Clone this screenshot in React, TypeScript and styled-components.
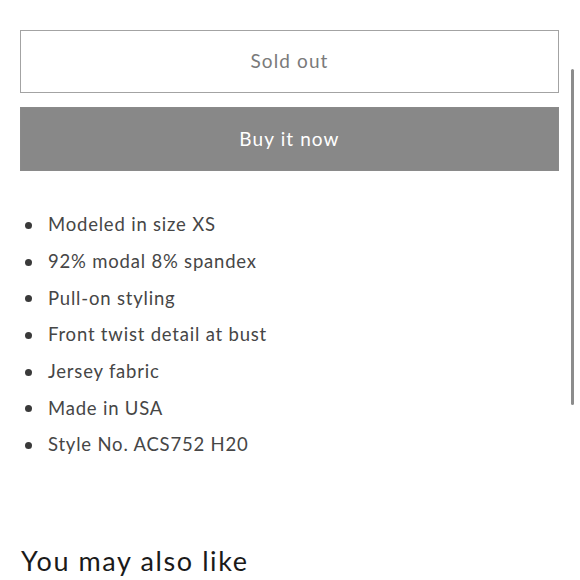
import React from 'react';
import styled, { createGlobalStyle } from 'styled-components';

const GlobalStyle = createGlobalStyle`
   html, body {
      margin: 0;
      padding: 0;
      background: #ffffff;
   }
   body {
      font-family: Lato, 'Open Sans', sans-serif;
      overflow: hidden;
   }
`;

const features = [
   'Modeled in size XS',
   '92% modal 8% spandex',
   'Pull-on styling',
   'Front twist detail at bust',
   'Jersey fabric',
   'Made in USA',
   'Style No. ACS752 H20',
];

const Page = styled.main`
   position: relative;
   width: 580px;
   height: 580px;
   padding: 30px 21px 0 20px;
   box-sizing: border-box;
`;

const Buttons = styled.div`
   display: flex;
   flex-direction: column;
   gap: 14px;
`;

const Button = styled.button<{ $filled?: boolean }>`
   display: flex;
   align-items: center;
   justify-content: center;
   width: 100%;
   height: ${(p) => (p.$filled ? '64px' : '63px')};
   margin: 0;
   padding: 0 0 2px;
   border: 1px solid ${(p) => (p.$filled ? '#8a8a8a' : '#a3a3a3')};
   background: ${(p) => (p.$filled ? '#888888' : '#ffffff')};
   color: ${(p) => (p.$filled ? '#ffffff' : '#7a7a7a')};
   font-family: Lato, 'Open Sans', sans-serif;
   font-size: 19px;
   letter-spacing: 1.1px;
   box-sizing: border-box;
`;

const List = styled.ul`
   list-style: none;
   margin: 35px 0 0;
   padding: 0;
   display: flex;
   flex-direction: column;
`;

const Item = styled.li`
   display: flex;
   align-items: center;
   height: 36.7px;
   color: #464646;
   font-size: 18.5px;
   letter-spacing: 0.8px;
   &::before {
      content: '';
      width: 7px;
      height: 7px;
      border-radius: 50%;
      background: #3a3a3a;
      margin: 2px 16px 0 5px;
      flex-shrink: 0;
   }
`;

const Heading = styled.h2`
   margin: 81px 0 0 1px;
   font-family: Lato, 'Open Sans', sans-serif;
   font-weight: 400;
   font-size: 27px;
   letter-spacing: 1.6px;
   color: #1a1a1a;
`;

const ScrollThumb = styled.div`
   position: absolute;
   top: 69px;
   right: 6px;
   width: 3px;
   height: 336px;
   border-radius: 2px;
   background: #8c8c8c;
`;

const App: React.FC = () => (
   <>
      <GlobalStyle />
      <Page>
         <Buttons>
            <Button>Sold out</Button>
            <Button $filled>Buy it now</Button>
         </Buttons>
         <List>
            {features.map((feature, i) => (
               <Item key={`f${i}`}>{feature}</Item>
            ))}
         </List>
         <Heading>You may also like</Heading>
         <ScrollThumb />
      </Page>
   </>
);

export default App;
